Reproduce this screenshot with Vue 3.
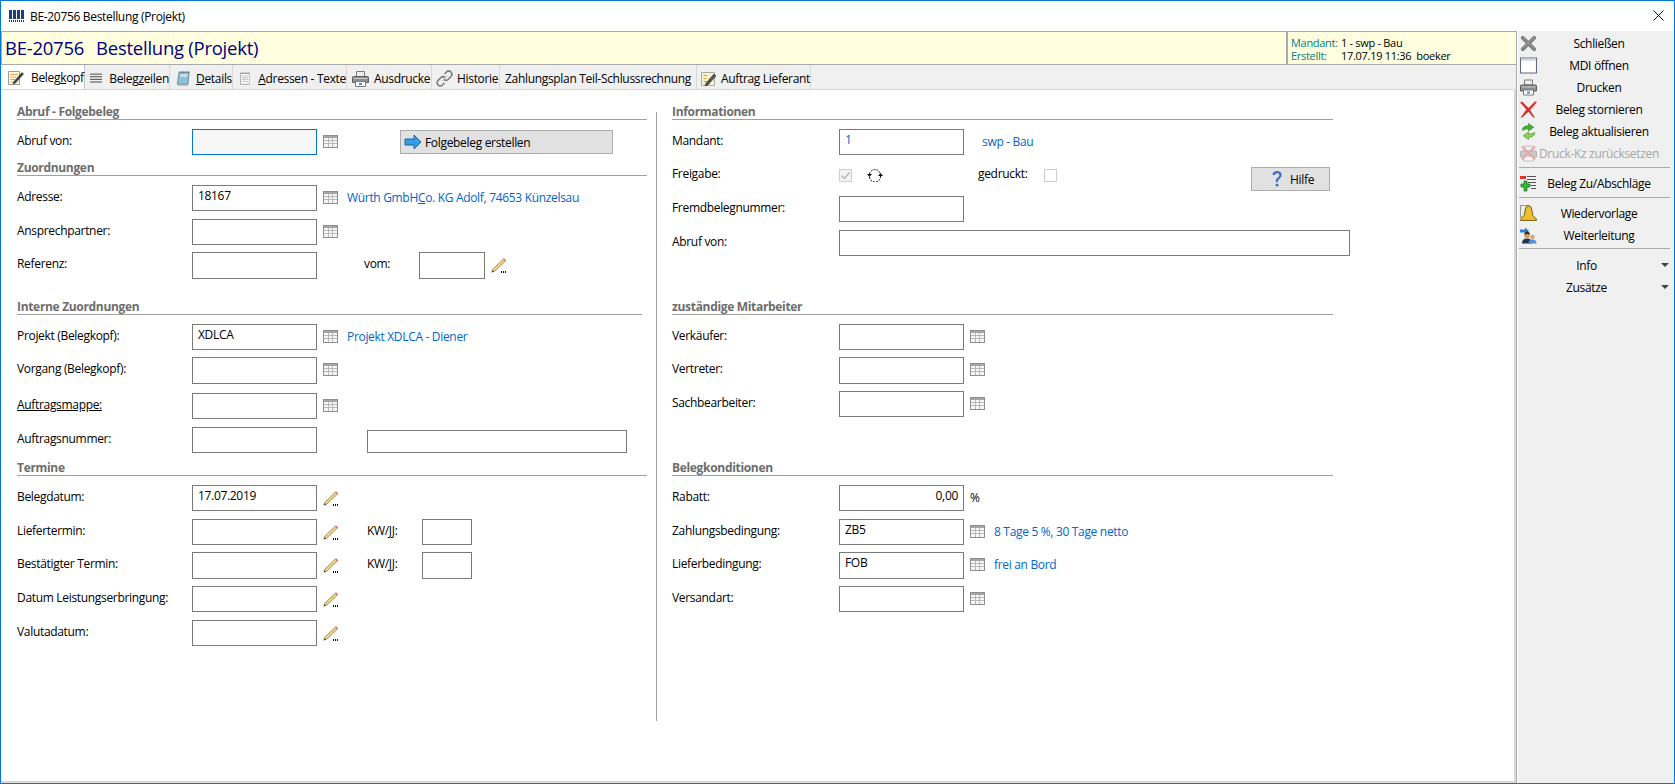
<template>
  <div class="win">
    <svg class="defs">
      <symbol id="i-app" viewBox="0 0 15 12">
        <path fill="#1d3f7c" d="M0 0h3v9H0zM4 0h3v9H4zM8 0h3v9H8zM12 0h3v9h-3z" />
        <path fill="#333" d="M0 10h1v2H0zM2 10h1v2H2zM4 10h1v2H4zM6 10h1v2H6zM8 10h1v2H8zM10 10h1v2h-1zM12 10h1v2h-1zM14 10h1v2h-1z" />
      </symbol>
      <symbol id="i-grid" viewBox="0 0 15 13">
        <rect x=".5" y=".5" width="14" height="12" fill="#f6f6f6" stroke="#8e8e8e" />
        <rect x="1" y="1" width="13" height="2" fill="#a5a5a5" />
        <path stroke="#b8b8b8" d="M5.5 3v9M9.5 3v9M1 5.5h13M1 8.5h13" />
      </symbol>
      <symbol id="i-pencil" viewBox="0 0 16 16">
        <path fill="#eed27e" stroke="#86754a" stroke-width=".7" d="M1 15l1-3L12.5 2l2 2L4 14z" />
        <path fill="#4d4d4d" d="M.6 15.400l.7-2.400 1.800 1.700z" />
        <path fill="#d9777a" d="M12.200 2.300l1-1 2.100 2.100-1 1z" />
        <path fill="#111" d="M10 14h1v2h-1zM12 14h1v2h-1zM14 14h1v2h-1z" />
      </symbol>
      <symbol id="i-arrow" viewBox="0 0 18 16">
        <path fill="#2f9fe8" stroke="#20639f" d="M1 5h9V1l7 7-7 7v-4H1z" />
      </symbol>
      <symbol id="i-head" viewBox="0 0 17 17">
        <path fill="#fdf8e2" stroke="#9a9a9a" d="M1.500 2.500h11v13h-11z" />
        <path stroke="#d6b15a" d="M3 5.500h8M3 8h6M3 10.500h5M3 13h5" />
        <path fill="#444" stroke="#222" stroke-width=".5" d="M7 12.500l8-9 1.500 1.500-8 9-2.500 1z" />
      </symbol>
      <symbol id="i-lines" viewBox="0 0 14 11">
        <path stroke="#333" d="M0 .5h14M0 3.500h14M0 6.500h14M0 9.500h14" />
      </symbol>
      <symbol id="i-book" viewBox="0 0 16 17">
        <path fill="#8cc4d6" stroke="#5f8490" d="M3.500 1.500h11.500l-1.500 13.500H1.500z" />
        <path fill="#d2e8ee" d="M5 4h8l-.3 2.500H4.700z" />
        <path stroke="#444" stroke-dasharray="1 1" d="M4 1h11" />
        <path stroke="#9e9e9e" d="M2 16h12" />
      </symbol>
      <symbol id="i-page" viewBox="0 0 14 17">
        <path fill="#fbfbfb" stroke="#8f8f8f" d="M.5 1.500h13v15H.5z" />
        <path stroke="#555" stroke-dasharray="1 1" d="M1 1h12" />
        <path stroke="#a9b1bc" d="M2.500 5h9M2.500 7.500h9M2.500 10h9M2.500 12.500h9" />
      </symbol>
      <symbol id="i-print" viewBox="0 0 17 16">
        <path fill="#eee" stroke="#7a7a7a" d="M4.500.5h8v5h-8z" />
        <path fill="#8d8d8d" stroke="#5f5f5f" d="M.5 6.500q0-1 1-1h14q1 0 1 1v5h-16z" />
        <path fill="#c9c9c9" d="M1.500 7h14v1h-14z" />
        <path fill="#fff" stroke="#7a7a7a" d="M3.500 10.500h10v5h-10z" />
        <path fill="#3b8fd0" d="M7 12h3v2H7z" />
      </symbol>
      <symbol id="i-print-off" viewBox="0 0 17 16">
        <g opacity=".4">
          <path fill="#eee" stroke="#7a7a7a" d="M4.500.5h8v5h-8z" />
          <path fill="#8d8d8d" stroke="#5f5f5f" d="M.5 6.500q0-1 1-1h14q1 0 1 1v5h-16z" />
          <path fill="#fff" stroke="#7a7a7a" d="M3.500 10.500h10v5h-10z" />
        </g>
        <path stroke="#e9a3a0" stroke-width="1.800" d="M2 1l13 13M15 1L2 14" />
      </symbol>
      <symbol id="i-chain" viewBox="0 0 17 17">
        <g fill="none" stroke="#7b7b7b" stroke-width="1.600">
          <path d="M8.500 4l2-2a2.800 2.800 0 0 1 4.500 4.500l-3 3a2.800 2.800 0 0 1-4 0" />
          <path d="M8.500 13l-2 2A2.800 2.800 0 0 1 2 10.500l3-3a2.800 2.800 0 0 1 4 0" />
        </g>
        <path stroke="#b5b5b5" d="M6 11l5-5" />
      </symbol>
      <symbol id="i-note" viewBox="0 0 16 16">
        <path fill="#fbf3c9" stroke="#a8a8a8" d="M.5 1.500h13v13H.5z" />
        <path stroke="#d69a3c" d="M2.500 4.500h4M2.500 7.500h3M2.500 10.500h3" />
        <path fill="#555" stroke="#222" stroke-width=".5" d="M5 12l8-9 2 2-8 9-3 1z" />
      </symbol>
      <symbol id="i-refresh" viewBox="0 0 16 14">
        <path fill="none" stroke="#111" stroke-dasharray="2 1" d="M2.500 6a5.500 5.500 0 0 1 10.500-1M13.500 8a5.500 5.500 0 0 1-11 1" />
        <path fill="#111" d="M0 6h5L2.500 9zM11 8h5l-2.500-3z" />
      </symbol>
      <symbol id="i-help" viewBox="0 0 10 16">
        <path fill="none" stroke="#3e6fc4" stroke-width="2.200" d="M1.500 4q.5-2.800 3.500-2.800 3.500 0 3.500 3 0 1.800-2 3T5 11" />
        <circle cx="5" cy="14" r="1.500" fill="#3e6fc4" />
      </symbol>
      <symbol id="i-close" viewBox="0 0 18 18">
        <path stroke="#7d7d7d" stroke-width="4" stroke-linecap="round" d="M3 3l12 12M15 3L3 15" />
        <path stroke="#a8a8a8" d="M3 2.500l12 12M15 2.500L3 14.500" />
      </symbol>
      <symbol id="i-mdi" viewBox="0 0 16 15">
        <path fill="#fff" stroke="#5e6a78" d="M.5 .5h15v14H.5z" />
        <path fill="#c8d7e6" d="M1 1h14v2H1z" />
      </symbol>
      <symbol id="i-cancel" viewBox="0 0 16 15">
        <path fill="#d4312a" d="M0 1l2-1 6 6 6-6 2 .5-6.500 7.500L14 15l-1.500 0L8 9.500 2 15H.5l5.500-7.500z" />
      </symbol>
      <symbol id="i-sync" viewBox="0 0 14 16">
        <path fill="#3fae2a" stroke="#2b7d1c" stroke-width=".5" d="M1 7q.5-4.500 6-4.500V.5l5 3.500-5 3.500V5.500Q4 5.500 1 7z" />
        <path fill="#8fd34f" stroke="#2b7d1c" stroke-width=".5" d="M13 9q-.5 4.500-6 4.500v2l-5-3.500 5-3.500v2q3 0 6-1.500z" />
      </symbol>
      <symbol id="i-listplus" viewBox="0 0 17 17">
        <path stroke="#555" d="M7 1.500h9M7 4.500h9M8 7.500h8M11 10.500h5M11 13.500h5" />
        <path fill="#e2322c" d="M0 1h6v3H0z" />
        <path fill="#35b53a" stroke="#1a6b1f" stroke-width=".7" d="M1 9h3V6h3v3h3v3H7v4H4v-4H1z" />
      </symbol>
      <symbol id="i-bell" viewBox="0 0 16 16">
        <path fill="#f0efe6" stroke="#999" d="M.5 .5h8v11h-8z" />
        <path fill="#eebf2f" stroke="#6f5912" stroke-width=".9" d="M8 .8q2.500 0 3 3l1 6 3.400 3.400v1.300H.6v-1.300L4 9.800l1-6q.5-3 3-3z" />
      </symbol>
      <symbol id="i-fwd" viewBox="0 0 17 16">
        <path fill="#2f7fdc" d="M0 2h5V0l4 3.500L5 7V5H0z" />
        <circle cx="7" cy="8" r="2.800" fill="#d99b60" />
        <path fill="#3a2a1a" d="M4 7q.5-3 3-3t3 3q-3-1-6 0z" />
        <path fill="#29324f" d="M2 16q0-5 5-5t5 5z" />
        <circle cx="12.500" cy="9.500" r="2.300" fill="#dfa66d" />
        <path fill="#4f93dd" d="M8.500 16q0-4 4-4t4 4z" />
      </symbol>
    </svg>

    <div class="titlebar">
      <svg class="app-ico"><use href="#i-app" /></svg>
      <span class="title-txt">BE-20756 Bestellung (Projekt)</span>
      <svg class="x-btn" viewBox="0 0 11 11"><path stroke="#111" d="M.5 .5l10 10M10.500 .5l-10 10" /></svg>
    </div>

    <div class="body">
      <div class="doc">
        <div class="head">
          <div class="head-title"><span>BE-20756</span><span>Bestellung (Projekt)</span></div>
          <div class="head-info">
            <div><span class="k">Mandant:</span>1 - swp - Bau</div>
            <div><span class="k">Erstellt:</span>17.07.19 11:36&nbsp; boeker</div>
          </div>
        </div>

        <div class="tabs">
          <div v-for="(t, i) in tabs" :key="t.text" class="tab" :class="[t.cls, { active: i === 0 }]">
            <svg v-if="t.icon" :class="t.icon"><use :href="'#' + t.icon" /></svg>
            <span>{{ mn(t.text).a }}<u>{{ mn(t.text).b }}</u>{{ mn(t.text).c }}</span>
          </div>
        </div>

        <div class="pane">
          <template v-for="(col, c) in columns" :key="c">
            <div v-if="c === 1" class="divider"></div>
            <div class="col" :class="col.cls">
              <template v-for="sec in col.sections" :key="sec.title">
                <h3 class="sec" :class="sec.cls">{{ sec.title }}</h3>
                <div v-for="r in sec.rows" :key="r.label" class="row" :class="r.cls">
                  <span class="lbl" :class="{ ul: r.ul }">{{ r.label }}</span>

                  <div v-if="r.check" class="check on">
                    <svg viewBox="0 0 13 13"><path fill="none" stroke="#b5b5b5" stroke-width="1.300" d="M2.500 6.500l3 3 5-6" /></svg>
                  </div>
                  <div v-else class="field" :class="r.field">{{ r.value }}</div>

                  <svg v-if="r.icon === 'grid'" class="ico-grid"><use href="#i-grid" /></svg>
                  <svg v-if="r.icon === 'pencil'" class="ico-pencil"><use href="#i-pencil" /></svg>
                  <a v-if="r.link" class="link" :class="{ solo: !r.icon }">{{ mn(r.link).a }}<u>{{ mn(r.link).b }}</u>{{ mn(r.link).c }}</a>
                  <span v-if="r.unit" class="unit">{{ r.unit }}</span>

                  <button v-if="r.follow" class="btn btn-follow">
                    <svg class="ico-arrow"><use href="#i-arrow" /></svg>Folgebeleg erstellen
                  </button>

                  <template v-if="r.vom">
                    <span class="lbl lbl-vom">vom:</span>
                    <div class="field f-vom h27"></div>
                    <svg class="ico-pencil"><use href="#i-pencil" /></svg>
                  </template>

                  <div v-if="r.extra" class="field f-extra"></div>

                  <template v-if="r.kw">
                    <span class="lbl lbl-kw">KW/JJ:</span>
                    <div class="field f-kw" :class="r.field"></div>
                  </template>

                  <template v-if="r.check">
                    <svg class="ico-refresh"><use href="#i-refresh" /></svg>
                    <span class="lbl lbl-ged">gedruckt:</span>
                    <div class="check"></div>
                    <button class="btn btn-help">
                      <svg class="ico-help"><use href="#i-help" /></svg>Hilfe
                    </button>
                  </template>
                </div>
              </template>
            </div>
          </template>
        </div>
      </div>

      <div class="side">
        <template v-for="(s, i) in sideItems" :key="i">
          <div v-if="s.sep" class="sep" :class="s.sep"></div>
          <div v-else class="side-item" :class="{ off: s.off, menu: s.menu }">
            <svg v-if="s.icon" class="side-ico"><use :href="'#' + s.icon" /></svg>
            <span class="side-txt">{{ s.text }}</span>
            <i v-if="s.menu" class="caret"></i>
          </div>
        </template>
      </div>
    </div>
  </div>
</template>

<script setup>
// & marks the mnemonic letter, like in the windows captions
const mn = (text) => {
  const i = text.indexOf('&')
  if (i < 0) return { a: text, b: '', c: '' }
  return { a: text.slice(0, i), b: text[i + 1], c: text.slice(i + 2) }
}

const tabs = [
  { text: 'Beleg&kopf', icon: 'i-head', cls: 't1' },
  { text: 'Beleg&zeilen', icon: 'i-lines', cls: 't2' },
  { text: '&Details', icon: 'i-book', cls: 't3' },
  { text: '&Adressen - Texte', icon: 'i-page', cls: 't4' },
  { text: 'Ausdrucke', icon: 'i-print', cls: 't5' },
  { text: 'Historie', icon: 'i-chain', cls: 't6' },
  { text: 'Zahlungsplan Teil-Schlussrechnung', cls: 't7' },
  { text: 'Auftrag Lieferant', icon: 'i-note', cls: 't8' }
]

const columns = [
  {
    cls: 'col-left',
    sections: [
      {
        title: 'Abruf - Folgebeleg',
        cls: 'first',
        rows: [{ label: 'Abruf von:', icon: 'grid', field: 'focus', follow: true }]
      },
      {
        title: 'Zuordnungen',
        cls: 's-zu',
        rows: [
          { label: 'Adresse:', value: '18167', icon: 'grid', link: 'Würth GmbH&Co. KG Adolf, 74653 Künzelsau' },
          { label: 'Ansprechpartner:', icon: 'grid' },
          { label: 'Referenz:', cls: 'tight', field: 'h27', vom: true }
        ]
      },
      {
        title: 'Interne Zuordnungen',
        cls: 's-int',
        rows: [
          { label: 'Projekt (Belegkopf):', value: 'XDLCA', icon: 'grid', link: 'Projekt XDLCA - Diener' },
          { label: 'Vorgang (Belegkopf):', cls: 'tight', field: 'h27', icon: 'grid' },
          { label: 'Auftragsmappe:', cls: 'wide', ul: true, icon: 'grid' },
          { label: 'Auftragsnummer:', extra: true }
        ]
      },
      {
        title: 'Termine',
        cls: 's-ter',
        rows: [
          { label: 'Belegdatum:', value: '17.07.2019', icon: 'pencil' },
          { label: 'Liefertermin:', icon: 'pencil', kw: true },
          { label: 'Bestätigter Termin:', cls: 'tight', field: 'h27', icon: 'pencil', kw: true },
          { label: 'Datum Leistungserbringung:', cls: 'tight', icon: 'pencil' },
          { label: 'Valutadatum:', icon: 'pencil' }
        ]
      }
    ]
  },
  {
    cls: 'col-right',
    sections: [
      {
        title: 'Informationen',
        cls: 'first',
        rows: [
          { label: 'Mandant:', value: '1', field: 'blue', link: 'swp - Bau' },
          { label: 'Freigabe:', cls: 'tight fix', check: true },
          { label: 'Fremdbelegnummer:' },
          { label: 'Abruf von:', field: 'long' }
        ]
      },
      {
        title: 'zuständige Mitarbeiter',
        cls: 's-mit',
        rows: [
          { label: 'Verkäufer:', icon: 'grid' },
          { label: 'Vertreter:', cls: 'tight', field: 'h27', icon: 'grid' },
          { label: 'Sachbearbeiter:', cls: 'tight', icon: 'grid' }
        ]
      },
      {
        title: 'Belegkonditionen',
        cls: 's-kon',
        rows: [
          { label: 'Rabatt:', value: '0,00', field: 'num', unit: '%' },
          { label: 'Zahlungsbedingung:', value: 'ZB5', icon: 'grid', link: '8 Tage 5 %, 30 Tage netto' },
          { label: 'Lieferbedingung:', value: 'FOB', cls: 'tight', field: 'h27', icon: 'grid', link: 'frei an Bord' },
          { label: 'Versandart:', cls: 'tight', icon: 'grid' }
        ]
      }
    ]
  }
]

const sideItems = [
  { text: 'Schließen', icon: 'i-close' },
  { text: 'MDI öffnen', icon: 'i-mdi' },
  { text: 'Drucken', icon: 'i-print' },
  { text: 'Beleg stornieren', icon: 'i-cancel' },
  { text: 'Beleg aktualisieren', icon: 'i-sync' },
  { text: 'Druck-Kz zurücksetzen', icon: 'i-print-off', off: true },
  { sep: 'sep-a' },
  { text: 'Beleg Zu/Abschläge', icon: 'i-listplus' },
  { sep: 'sep-a' },
  { text: 'Wiedervorlage', icon: 'i-bell' },
  { text: 'Weiterleitung', icon: 'i-fwd' },
  { sep: 'sep-b' },
  { text: 'Info', menu: true },
  { text: 'Zusätze', menu: true }
]
</script>

<style>
html,
body {
  margin: 0;
  overflow: hidden;
}
</style>

<style scoped>
.win {
  width: 1675px;
  height: 784px;
  box-sizing: border-box;
  border: 1px solid #0078d7;
  display: flex;
  flex-direction: column;
  background: #fff;
  color: #000;
  font-family: "Open Sans", "Noto Sans", sans-serif;
  font-size: 12px;
  letter-spacing: -0.32px;
}
.defs {
  display: none;
}
.titlebar {
  height: 30px;
  display: flex;
  align-items: center;
  flex: none;
}
.app-ico {
  width: 15px;
  height: 12px;
  margin-left: 8px;
}
.title-txt {
  margin-left: 6px;
}
.x-btn {
  width: 11px;
  height: 11px;
  margin-left: auto;
  margin-right: 10px;
  margin-top: -2px;
}

.body {
  flex: 1;
  display: flex;
  min-height: 0;
}
.doc {
  width: 1515px;
  display: flex;
  flex-direction: column;
  flex: none;
}
.head {
  height: 34px;
  box-sizing: border-box;
  flex: none;
  display: flex;
  justify-content: space-between;
  background: #ffffe0;
  border-top: 1px solid #a9a9a9;
  border-bottom: 1px solid #a9a9a9;
  border-left: 1px solid #a9a9a9;
}
.head-title {
  color: #000080;
  font-size: 18.5px;
  letter-spacing: -0.25px;
  line-height: 31px;
  padding-left: 3px;
  display: flex;
  gap: 12px;
}
.head-info {
  width: 230px;
  box-sizing: border-box;
  border-left: 2px solid #a9a9a9;
  padding-left: 3px;
  font-size: 11px;
  letter-spacing: -0.3px;
  line-height: 13px;
  padding-top: 4px;
}
.k {
  display: inline-block;
  width: 50px;
  color: #008080;
}

.tabs {
  height: 24px;
  flex: none;
  display: flex;
  background: #f0f0f0;
  padding-left: 1px;
}
.tab {
  height: 24px;
  box-sizing: border-box;
  display: flex;
  align-items: center;
  border-right: 1px solid #d9d9d9;
  padding-top: 3px;
  white-space: nowrap;
}
.tab.active {
  background: #fff;
  padding-top: 0;
  border-right-color: #c4c4c4;
}
.t1 { width: 83px; padding-left: 5px; }
.t2 { width: 85px; padding-left: 5px; }
.t3 { width: 63px; padding-left: 6px; }
.t4 { width: 114px; padding-left: 7px; }
.t5 { width: 85px; padding-left: 5px; }
.t6 { width: 68px; padding-left: 4px; }
.t7 { width: 197px; padding-left: 5px; }
.t8 { width: 114px; padding-left: 4px; }
.i-head { width: 17px; height: 17px; margin-right: 7px; }
.i-lines { width: 14px; height: 11px; margin-right: 7px; }
.i-book { width: 16px; height: 17px; margin-right: 6px; }
.i-page { width: 14px; height: 17px; margin-right: 8px; }
.i-print { width: 17px; height: 16px; margin-right: 5px; }
.i-chain { width: 17px; height: 17px; margin-right: 4px; }
.i-note { width: 16px; height: 16px; margin-right: 4px; }

.pane {
  flex: 1;
  display: flex;
  box-sizing: border-box;
  border-top: 1px solid #d9d9d9;
  border-right: 2px solid #d9d9d9;
  border-bottom: 2px solid #d9d9d9;
  padding: 0 0 0 16px;
  min-height: 0;
}
.col-left {
  width: 630px;
}
.col-right {
  width: 661px;
}
.divider {
  width: 1px;
  height: 609px;
  background: #a0a0a0;
  margin: 22px 15px 0 9px;
}

.sec {
  margin: 0;
  height: 17px;
  line-height: 18px;
  box-sizing: border-box;
  font-size: 12px;
  font-weight: 700;
  color: #6d6d6d;
  border-bottom: 1px solid #a0a0a0;
}
.first { margin-top: 13px; }
.s-zu { margin-top: 4px; }
.s-int { margin-top: 19px; margin-right: 5px; }
.s-ter { margin-top: 6px; }
.s-mit { margin-top: 42px; }
.s-kon { margin-top: 42px; }

.row {
  display: flex;
  align-items: flex-start;
  margin-top: 8px;
}
.sec + .row {
  margin-top: 9px;
}
.row.tight {
  margin-top: 7px;
}
.row.wide {
  margin-top: 9px;
}
.row.fix {
  height: 26px;
}
.lbl {
  flex: none;
  line-height: 24px;
}
.col-left .lbl {
  width: 175px;
}
.col-right .lbl {
  width: 167px;
}
.ul {
  text-decoration: underline;
}
.field {
  flex: none;
  width: 125px;
  height: 26px;
  box-sizing: border-box;
  border: 1px solid #7a7a7a;
  padding: 1px 5px;
  line-height: 17px;
}
.h27 {
  height: 27px;
}
.focus {
  border-color: #0078d7;
  background: #f6f6f6;
}
.blue {
  color: #0066cc;
}
.num {
  text-align: right;
  padding-right: 5px;
}
.long {
  width: 511px;
}
.link {
  margin-left: 9px;
  color: #0066cc;
  line-height: 26px;
  white-space: nowrap;
}
.link.solo {
  margin-left: 18px;
}
.unit {
  margin-left: 6px;
  line-height: 26px;
}
.ico-grid {
  width: 15px;
  height: 13px;
  margin: 6px 0 0 6px;
  flex: none;
}
.ico-pencil {
  width: 16px;
  height: 16px;
  margin: 5px 0 0 6px;
  flex: none;
}
.btn {
  box-sizing: border-box;
  height: 24px;
  display: flex;
  align-items: center;
  background: #e1e1e1;
  border: 1px solid #adadad;
  color: #000;
  font: inherit;
  letter-spacing: inherit;
  padding: 0;
}
.btn-follow {
  width: 213px;
  margin: 1px 0 0 62px;
  padding-left: 3px;
}
.ico-arrow {
  width: 18px;
  height: 16px;
  margin-right: 3px;
}
.col-left .lbl-vom {
  width: 55px;
  margin-left: 47px;
}
.f-vom {
  width: 66px;
}
.f-extra {
  width: 260px;
  height: 23px;
  margin: 3px 0 0 50px;
}
.col-left .lbl-kw {
  width: 55px;
  margin-left: 28px;
}
.f-kw {
  width: 50px;
}
.check {
  flex: none;
  width: 13px;
  height: 13px;
  box-sizing: border-box;
  border: 1px solid #cfcfcf;
  margin-top: 7px;
}
.check svg {
  display: block;
  width: 13px;
  height: 13px;
  margin: -1px;
}
.check.on {
  background: #f3f3f3;
}
.ico-refresh {
  width: 16px;
  height: 14px;
  margin: 6px 0 0 15px;
  flex: none;
}
.col-right .lbl-ged {
  width: 66px;
  margin-left: 95px;
}
.btn-help {
  width: 79px;
  margin: 5px 0 0 194px;
  padding-left: 20px;
}
.ico-help {
  width: 10px;
  height: 16px;
  margin-right: 8px;
}

.side {
  flex: 1;
  background: #f0f0f0;
  border-left: 1px solid #a9a9a9;
  box-shadow: inset 1px 0 0 #fff;
  padding: 1px 2px 0 2px;
}
.side-item {
  height: 22px;
  display: flex;
  align-items: center;
  position: relative;
}
.side-ico {
  width: 17px;
  height: 17px;
  margin-left: 1px;
  flex: none;
}
.side-txt {
  flex: 1;
  text-align: center;
  padding-right: 11px;
}
.menu .side-txt {
  padding: 0 18px 0 0;
}
.off {
  color: #a6a6a6;
}
.caret {
  position: absolute;
  right: 3px;
  top: 9px;
  border-left: 4px solid transparent;
  border-right: 4px solid transparent;
  border-top: 4px solid #444;
}
.sep {
  height: 1px;
  background: #a9a9a9;
  margin: 3px 2px 4px 0;
}
.sep-b {
  margin: 2px 2px 5px 0;
}
</style>
